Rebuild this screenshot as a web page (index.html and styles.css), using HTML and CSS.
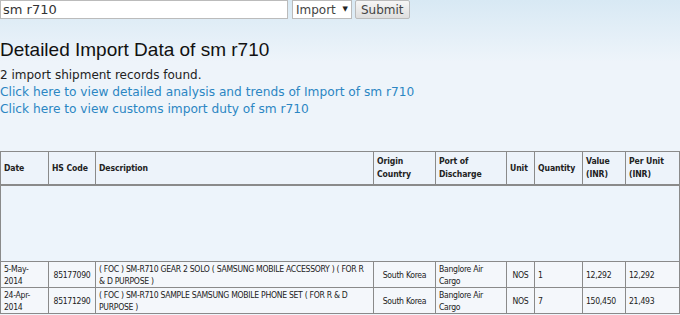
FILE: index.html
```html
<!DOCTYPE html>
<html lang="en">

<head>
    <meta charset="UTF-8">
    <title>Detailed Import Data of sm r710</title>
    <link rel="stylesheet" href="styles.css">
</head>

<body>
    <form class="search">
        <input class="search-input" type="text" value="sm r710">
        <span class="select-wp">
            <select class="search-type">
                <option>Import</option>
                <option>Export</option>
            </select>
            <i class="arrow">&#9660;</i>
        </span>
        <button class="search-btn" type="button">Submit</button>
    </form>

    <h1 class="title">Detailed Import Data of sm r710</h1>
    <p class="found">2 import shipment records found.</p>
    <a class="link" href="#">Click here to view detailed analysis and trends of Import of sm r710</a>
    <a class="link" href="#">Click here to view customs import duty of sm r710</a>

    <table class="records">
        <thead>
            <tr>
                <th class="c-date">Date</th>
                <th class="c-hs">HS Code</th>
                <th class="c-desc">Description</th>
                <th class="c-origin">Origin Country</th>
                <th class="c-port">Port of Discharge</th>
                <th class="c-unit">Unit</th>
                <th class="c-qty">Quantity</th>
                <th class="c-value">Value (INR)</th>
                <th class="c-per">Per Unit (INR)</th>
            </tr>
        </thead>
        <tbody>
            <tr class="spacer">
                <td colspan="9"></td>
            </tr>
            <tr>
                <td>5-May-2014</td>
                <td class="center">85177090</td>
                <td>( FOC ) SM-R710 GEAR 2 SOLO ( SAMSUNG MOBILE ACCESSORY ) ( FOR R &amp; D PURPOSE )</td>
                <td class="center">South Korea</td>
                <td>Banglore Air Cargo</td>
                <td class="center">NOS</td>
                <td>1</td>
                <td>12,292</td>
                <td>12,292</td>
            </tr>
            <tr>
                <td>24-Apr-2014</td>
                <td class="center">85171290</td>
                <td>( FOC ) SM-R710 SAMPLE SAMSUNG MOBILE PHONE SET ( FOR R &amp; D PURPOSE )</td>
                <td class="center">South Korea</td>
                <td>Banglore Air Cargo</td>
                <td class="center">NOS</td>
                <td>7</td>
                <td>150,450</td>
                <td>21,493</td>
            </tr>
        </tbody>
    </table>
</body>

</html>
```

FILE: styles.css
```css
body {
    margin: 0;
    font-family: "DejaVu Sans", Verdana, sans-serif;
    color: #222;
    background: #eef4fa linear-gradient(to bottom, #d8e9f4 0px, #e6f0f8 40px, #eef4fa 62px) no-repeat;
    min-height: 315px;
}

.search {
    display: flex;
    align-items: center;
    height: 19px;
}

.search-input {
    width: 288px;
    height: 19px;
    box-sizing: border-box;
    margin: 0;
    padding: 0 2px;
    border: 1px solid #bbb;
    background: #fff;
    font-family: "DejaVu Sans", Verdana, sans-serif;
    font-size: 13px;
    color: #333;
}

.select-wp {
    position: relative;
    margin-left: 4px;
}

.search-type {
    display: block;
    appearance: none;
    -webkit-appearance: none;
    margin: 0;
    width: 60px;
    height: 19px;
    padding: 0 0 0 3px;
    font-family: "DejaVu Sans", Verdana, sans-serif;
    font-size: 12px;
    color: #444;
    border: 1px solid #bbb;
    border-radius: 0;
    background: #fff;
}

.select-wp .arrow {
    position: absolute;
    right: 4px;
    top: 5px;
    font-style: normal;
    font-size: 7px;
    color: #222;
    pointer-events: none;
}

.search-btn {
    margin: 0 0 0 3px;
    height: 19px;
    padding: 0 5px;
    font-family: "DejaVu Sans", Verdana, sans-serif;
    font-size: 12px;
    color: #444;
    border: 1px solid #bbb;
    border-radius: 2px;
    background: linear-gradient(#f6f6f6, #dedede);
}

.title {
    margin: 19px 0 0;
    font-family: "Liberation Sans", Arial, sans-serif;
    font-weight: normal;
    font-size: 19px;
    line-height: 23px;
    color: #111;
}

.found {
    margin: 6px 0 0;
    font-size: 12px;
    line-height: 17px;
}

.link {
    display: block;
    font-size: 12.2px;
    line-height: 17px;
    color: #2b86c3;
    text-decoration: none;
}

.records {
    margin-top: 33px;
    width: 680px;
    table-layout: fixed;
    border-collapse: collapse;
    border: 1px solid #8a8a8a;
    font-family: "DejaVu Sans Condensed", "DejaVu Sans", sans-serif;
    font-size: 8.6px;
    letter-spacing: -0.3px;
    color: #222;
}

.records th {
    height: 32px;
    padding: 0 3px;
    text-align: left;
    font-weight: bold;
    letter-spacing: -0.1px;
    line-height: 13px;
    background: #edf3fa;
    border: 1px solid #8a8a8a;
    border-bottom: 2px solid #8a8a8a;
}

.records td {
    height: 25px;
    padding: 0 3px;
    line-height: 12px;
    background: #f4f7fb;
    border: 1px solid #8a8a8a;
}

.records .spacer td {
    height: 75px;
    background: #edf4fb;
}

.records .center {
    text-align: center;
}

.c-date { width: 41px; }
.c-hs { width: 40px; }
.c-desc { width: 271px; }
.c-origin { width: 55px; }
.c-port { width: 64px; }
.c-unit { width: 21px; }
.c-qty { width: 41px; }
.c-value { width: 36px; }
.c-per { width: 47px; }
```
